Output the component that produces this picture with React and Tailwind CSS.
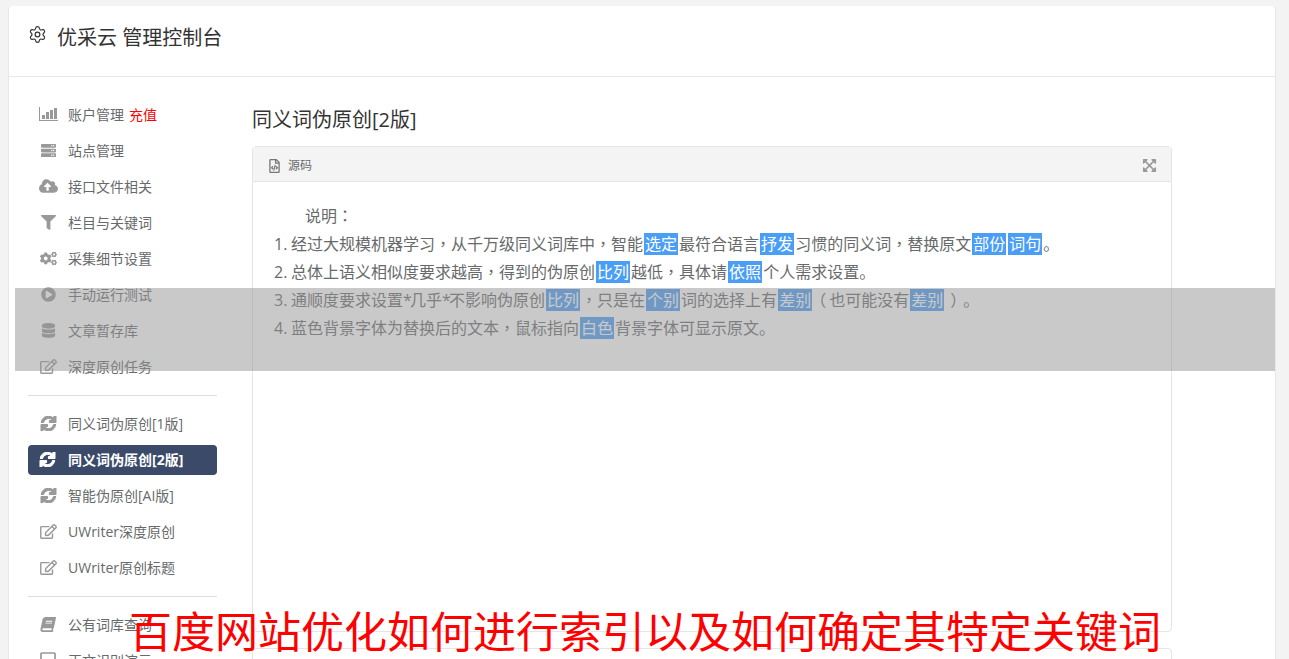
import { Settings } from 'lucide-react';
import {
  FaServer, FaCloudUploadAlt, FaFilter, FaCogs, FaPlayCircle, FaDatabase,
  FaRegEdit, FaSync, FaBook, FaRegFileCode, FaExpandArrowsAlt, FaRegSquare,
} from 'react-icons/fa';

function BarChart({ className }) {
  return (
    <svg viewBox="0 0 19 14" className={className} fill="currentColor">
      <path d="M0 0h1v13h18v1H0z" />
      <path d="M3 8h3v4H3zM7 5h3v7H7zM11 3h3v9h-3zM15 1h3v11h-3z" />
    </svg>
  );
}

function Sync(props) {
  return <FaSync {...props} strokeWidth={36} />;
}

function Book() {
  return <FaBook className="w-[16px] h-[15px] -skew-x-12 text-[#999999]" />;
}

function BlankBox() {
  return <FaRegSquare className="w-[18px] h-[18px] text-[#999999]" />;
}

function Cloud() {
  return <FaCloudUploadAlt className="w-[19px] h-[16px] text-[#999999]" />;
}

function Chart() {
  return <BarChart className="w-[19px] h-[14px] text-[#999999]" />;
}

const groupOne = [
  { icon: Chart, label: '账户管理', extra: '充值' },
  { icon: FaServer, label: '站点管理' },
  { icon: Cloud, label: '接口文件相关' },
  { icon: FaFilter, label: '栏目与关键词' },
  { icon: FaCogs, label: '采集细节设置' },
  { icon: FaPlayCircle, label: '手动运行测试' },
  { icon: FaDatabase, label: '文章暂存库' },
  { icon: FaRegEdit, label: '深度原创任务' },
];

const groupTwo = [
  { icon: Sync, label: '同义词伪原创[1版]' },
  { icon: Sync, label: '同义词伪原创[2版]', active: true },
  { icon: Sync, label: '智能伪原创[AI版]' },
  { icon: FaRegEdit, label: 'UWriter深度原创' },
  { icon: FaRegEdit, label: 'UWriter原创标题' },
];

const groupThree = [
  { icon: Book, label: '公有词库查询' },
  { icon: BlankBox, label: '正文识别演示' },
];

function NavItem({ item }) {
  const Icon = item.icon;
  if (item.active) {
    return (
      <div className="h-[30px] mt-[4px] mb-[2px] pb-[2px] flex items-center pl-[11px] rounded bg-[#3a4a68] text-white font-bold">
        <Icon className="w-[17px] h-[15px] mr-[12px] text-white" />
        <span>{item.label}</span>
      </div>
    );
  }
  return (
    <div className="h-9 flex items-center pl-[10px]">
      <span className="w-[20px] mr-[10px] flex justify-center">
        <Icon className="w-[17px] h-[15px] text-[#999999]" />
      </span>
      <span>{item.label}</span>
      {item.extra && <span className="ml-[5px] text-[#ff0000]">{item.extra}</span>}
    </div>
  );
}

function Hl({ children }) {
  return <span className="bg-[#4a9ef5] text-white px-px mx-px">{children}</span>;
}

// 标点居中
function Pt({ children }) {
  return <span className="font-['Noto_Sans_CJK_TC'] leading-none">{children}</span>;
}

function Num({ children }) {
  return <span className="inline-block w-[17px]">{children}</span>;
}

function Star() {
  return <span className="inline-block w-[7px]">*</span>;
}

function App() {
  return (
    <div
      className="relative h-[659px] overflow-hidden bg-[#f3f3f4] text-[14px] text-[#676a6c]"
      style={{ fontFamily: '"Open Sans", "Noto Sans CJK SC", sans-serif' }}
    >
      <div className="ml-2 mt-1.5 w-[1268px] h-[700px] bg-white rounded-t border-x border-[#e7e7e7]">
        <div className="h-[71px] flex items-center pl-[19px] pb-[7px] border-b border-[#e7e7e7] text-[20px] text-[#333333]">
          <Settings className="w-[19px] h-[19px] mr-[10px] mb-[6px]" strokeWidth={1.5} />
          <span className="whitespace-pre">优采云 管理控制台</span>
        </div>
        <div className="flex">
          <div className="w-[243px] pl-[19px] pr-[35px] pt-[19px] shrink-0">
            {groupOne.map((item) => <NavItem key={item.label} item={item} />)}
            <div className="border-t border-[#e0e0e0] mt-[11px] mb-[9px]" />
            {groupTwo.map((item) => <NavItem key={item.label} item={item} />)}
            <div className="border-t border-[#e0e0e0] mt-[11px] mb-[9px]" />
            {groupThree.map((item) => <NavItem key={item.label} item={item} />)}
          </div>
          <div className="w-[920px] pt-[29px]">
            <h2 className="text-[20px] leading-[28px] text-[#333333] mb-[12px]">同义词伪原创[2版]</h2>
            <div className="h-[486px] border border-[#e5e5e5] rounded">
              <div className="h-[35px] flex items-center justify-between bg-[#f4f4f4] border-b border-[#e5e5e5] pt-[3px] pl-[16px] pr-[14px] text-[12px]">
                <div className="flex items-center">
                  <FaRegFileCode className="w-[11px] h-[14px] mr-[8px] text-[#777777]" />
                  <span>源码</span>
                </div>
                <FaExpandArrowsAlt className="w-[15px] h-[15px] text-[#999999]" />
              </div>
              <div className="pt-5 pl-[21px] text-[16px] leading-[28px]">
                <p className="h-7 pl-[31px]">说明<Pt>：</Pt></p>
                <p className="h-7"><Num>1.</Num>经过大规模机器学习<Pt>，</Pt>从千万级同义词库中<Pt>，</Pt>智能<Hl>选定</Hl>最符合语言<Hl>抒发</Hl>习惯的同义词<Pt>，</Pt>替换原文<Hl>部份</Hl><Hl>词句</Hl>。</p>
                <p className="h-7"><Num>2.</Num>总体上语义相似度要求越高<Pt>，</Pt>得到的伪原创<Hl>比列</Hl>越低<Pt>，</Pt>具体请<Hl>依照</Hl>个人需求设置。</p>
                <p className="h-7"><Num>3.</Num>通顺度要求设置<Star />几乎<Star />不影响伪原创<Hl>比列</Hl><Pt>，</Pt>只是在<Hl>个别</Hl>词的选择上有<Hl>差别</Hl><span className="inline-block leading-none -translate-x-[3px]">（</span>也可能没有<Hl>差别</Hl><span className="inline-block leading-none translate-x-[5px]">）</span><span className="inline-block leading-none translate-x-[2px]">。</span></p>
                <p className="h-7"><Num>4.</Num>蓝色背景字体为替换后的文本<Pt>，</Pt>鼠标指向<Hl>白色</Hl>背景字体可显示原文。</p>
              </div>
            </div>
            <div className="mt-4 h-20 border border-[#e5e5e5] rounded" />
          </div>
        </div>
      </div>
      <div className="absolute left-[15px] top-[288px] w-[1260px] h-[83px] bg-[#939393]/50" />
      <div className="absolute left-0 right-0 top-[604px] pl-[129px] text-[43px] leading-[56px] text-[#ff0000] whitespace-nowrap">
        百度网站优化如何进行索引以及如何确定其特定关键词
      </div>
    </div>
  );
}

export default App;
